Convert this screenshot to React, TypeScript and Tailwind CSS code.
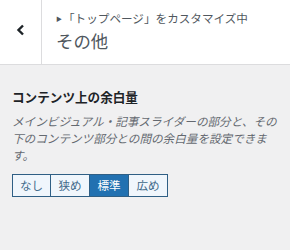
import { useState } from 'react';

const options = ['なし', '狭め', '標準', '広め'];

export default function App() {
  const [selected, setSelected] = useState('標準');
  return (
    <div
      className="w-[290px] h-[250px] bg-[#f0f0f1] overflow-hidden"
      style={{ fontFamily: '"Noto Sans", "Noto Sans CJK JP", sans-serif' }}
    >
      <div className="flex h-[65px] bg-white border-b border-[#dcdcde]">
        <button className="w-[42px] flex items-center justify-center border-r border-[#dcdcde]">
          <svg width="10" height="12" viewBox="0 0 10 12" className="mt-[-4px]">
            <path d="M7 1.5 L2.5 6 L7 10.5" fill="none" stroke="#1d2327" strokeWidth="2.4" />
          </svg>
        </button>
        <div className="flex flex-col pl-[14px] pt-[10px]">
          <div className="flex items-center text-[11.6px] leading-[18px] text-[#50575e]">
            <span className="text-[6px] mr-[1px] text-[#50575e]">▶</span>
            <span>「トップページ」をカスタマイズ中</span>
          </div>
          <div className="text-[17.4px] leading-[26px] text-[#50575e]">その他</div>
        </div>
      </div>
      <div className="px-[12px] pt-[23px]">
        <div className="text-[12.6px] font-bold leading-[20px] text-[#1d2327]">
          コンテンツ上の余白量
        </div>
        <p className="mt-[5px] text-[11.6px] leading-[17px] italic text-[#646970] w-[268px]">
          メインビジュアル・記事スライダーの部分と、その下のコンテンツ部分との間の余白量を設定できます。
        </p>
        <div className="flex mt-[10px]">
          {options.map((o, i) => (
            <button
              key={o}
              onClick={() => setSelected(o)}
              className={
                'h-[23px] w-[39px] text-[11.6px] border border-[#2f5f85] ' +
                (i > 0 ? 'border-l-0 ' : '') +
                (selected === o
                  ? 'bg-[#2271b1] text-white'
                  : 'bg-[#f0f6fc] text-[#3f6a8a]')
              }
            >
              {o}
            </button>
          ))}
        </div>
      </div>
    </div>
  );
}
